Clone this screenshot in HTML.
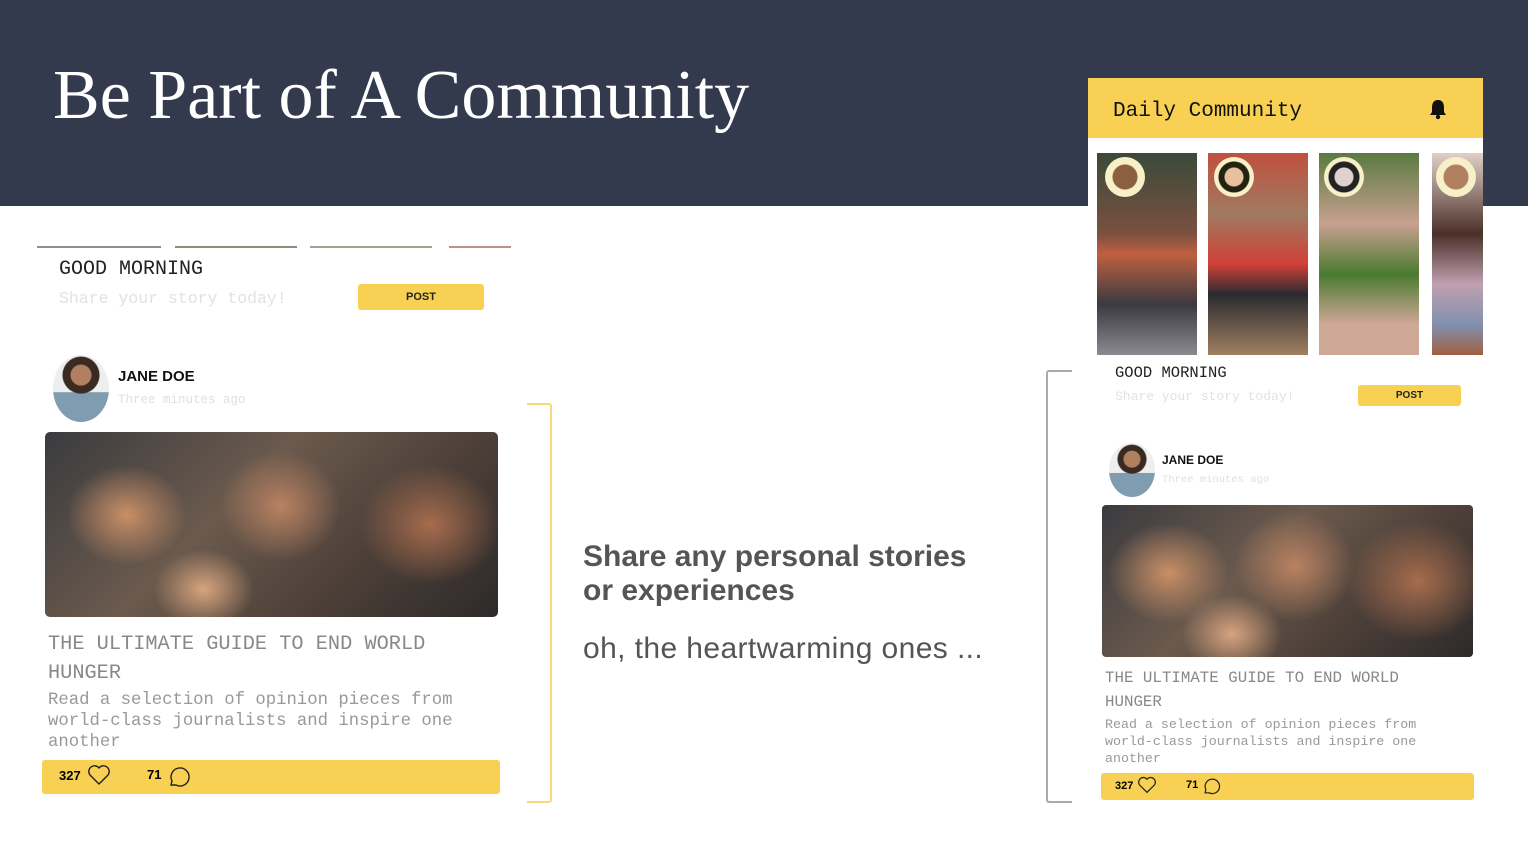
<!DOCTYPE html>
<html><head><style>
*{margin:0;padding:0;box-sizing:border-box}
body{width:1528px;height:854px;position:relative;background:#fff;overflow:hidden;font-family:"Liberation Sans",sans-serif}
.a{position:absolute}
.mono{font-family:"Liberation Mono",monospace}
.photo{background:
radial-gradient(ellipse 60px 50px at 18% 45%,#c98f66,transparent),
radial-gradient(ellipse 60px 55px at 52% 40%,#b98262,transparent),
radial-gradient(ellipse 70px 60px at 85% 50%,#a66c4d,transparent),
radial-gradient(ellipse 50px 40px at 35% 85%,#d7a47e,transparent),
linear-gradient(135deg,#3a3b3f,#6b5a4d 40%,#4c3f38 70%,#2d2a2a);}
.bar{background:#f7d054;border-radius:3px}
.post{background:#f7d054;border-radius:3px;font-size:11px;text-align:center;font-weight:bold;color:#222}
</style></head><body>
<div class="a" style="left:0;top:0;width:1528px;height:206px;background:#333a4d"></div>
<div class="a" style="left:53px;top:56px;font-family:'Liberation Serif',serif;font-size:70px;color:#fff">Be Part of A Community</div>

<div class="a" style="left:37px;top:246px;width:124px;height:2px;background:#8a8f9a"></div>
<div class="a" style="left:175px;top:246px;width:122px;height:2px;background:#8a9080"></div>
<div class="a" style="left:310px;top:246px;width:122px;height:2px;background:#a8a090"></div>
<div class="a" style="left:449px;top:246px;width:62px;height:2px;background:#c09088"></div>
<div class="a mono" style="left:59px;top:258px;font-size:20px;color:#222">GOOD MORNING</div>
<div class="a mono" style="left:59px;top:289px;font-size:16.5px;color:#e2e2e2">Share your story today!</div>
<div class="a post" style="left:358px;top:284px;width:126px;height:26px;line-height:26px">POST</div>
<div class="a" style="left:53px;top:355px;width:56px;height:67px;border-radius:50%;background:radial-gradient(circle at 50% 30%,#b08060 0 10px,#3a2a22 11px 18px,transparent 19px),linear-gradient(#eee 55%,#7f9cb0 56%);"></div>
<div class="a" style="left:118px;top:368px;font-size:15px;font-weight:bold;color:#111">JANE DOE</div>
<div class="a mono" style="left:118px;top:393px;font-size:12.5px;color:#e0e0e0">Three minutes ago</div>
<div class="a photo" style="left:45px;top:432px;width:453px;height:185px;border-radius:5px"></div>
<div class="a mono" style="left:48px;top:630px;font-size:20.3px;line-height:29px;color:#888;width:440px">THE ULTIMATE GUIDE TO END WORLD HUNGER</div>
<div class="a mono" style="left:48px;top:690px;font-size:17.3px;line-height:21px;color:#999;width:440px">Read a selection of opinion pieces from world-class journalists and inspire one another</div>
<div class="a bar" style="left:42px;top:760px;width:458px;height:34px"></div>
<div class="a" style="left:59px;top:768px;font-size:13px;font-weight:bold">327</div>
<svg class="a" style="left:87px;top:764px" width="24" height="22" viewBox="0 0 24 22"><path d="M12 20 L3 11 A5 5 0 0 1 12 4 A5 5 0 0 1 21 11 Z" fill="none" stroke="#222" stroke-width="1.4"/></svg>
<div class="a" style="left:147px;top:767px;font-size:13px;font-weight:bold">71</div>
<svg class="a" style="left:166px;top:764px" width="26" height="25" viewBox="0 0 26 25"><path d="M5 21 L6 17 A9 9 0 1 1 10 21 Z" fill="none" stroke="#222" stroke-width="1.4"/></svg>
<div class="a" style="left:527px;top:403px;width:25px;height:400px;border:2px solid #f7d87a;border-left:none;border-radius:0 3px 3px 0"></div>

<div class="a" style="left:583px;top:540px;font-size:30px;font-weight:bold;color:#555;line-height:34px">Share any personal stories<br>or experiences</div>
<div class="a" style="left:583px;top:632px;font-size:30px;letter-spacing:0.4px;color:#555">oh, the heartwarming ones ...</div>

<div class="a" style="left:1088px;top:78px;width:395px;height:340px;background:#fff"></div>
<div class="a" style="left:1088px;top:78px;width:395px;height:60px;background:#f7d054"></div>
<div class="a mono" style="left:1113px;top:100px;font-size:21px;color:#111">Daily Community</div>
<svg class="a" style="left:1428px;top:98px" width="20" height="22" viewBox="0 0 20 22"><path d="M10 2 C5 2 4 6 4 10 L4 14 L2 17 L18 17 L16 14 L16 10 C16 6 15 2 10 2Z" fill="#111"/><circle cx="10" cy="19" r="2.2" fill="#111"/></svg>
<div class="a" style="left:1097px;top:153px;width:100px;height:202px;background:linear-gradient(#3a4a3a,#7a5040 40%,#c06040 50%,#3a3a40 75%,#8a8a90)"></div>
<div class="a" style="left:1208px;top:153px;width:100px;height:202px;background:linear-gradient(#c05040,#a07a60 30%,#d04038 55%,#2a2a30 70%,#a08060)"></div>
<div class="a" style="left:1319px;top:153px;width:100px;height:202px;background:linear-gradient(#5a7a40,#c8a090 35%,#4a7a30 60%,#d0a898 85%)"></div>
<div class="a" style="left:1432px;top:153px;width:51px;height:202px;background:linear-gradient(#e0d0c8,#4a3028 40%,#c0a0b0 65%,#8090b0 85%,#a06040)"></div>
<div class="a" style="left:1105px;top:157px;width:40px;height:40px;border-radius:50%;background:radial-gradient(circle,#8a6040 0 12px,#f8f0c8 13px)"></div>
<div class="a" style="left:1214px;top:157px;width:40px;height:40px;border-radius:50%;background:radial-gradient(circle,#e8c0a0 0 9px,#221 10px 15px,#f8f0c8 16px)"></div>
<div class="a" style="left:1324px;top:157px;width:40px;height:40px;border-radius:50%;background:radial-gradient(circle,#e0d0d0 0 9px,#222 10px 15px,#f8f0c8 16px)"></div>
<div class="a" style="left:1436px;top:157px;width:40px;height:40px;border-radius:50%;background:radial-gradient(circle,#b08060 0 12px,#f8f0c8 13px)"></div>
<div class="a mono" style="left:1115px;top:364px;font-size:15.5px;color:#222">GOOD MORNING</div>
<div class="a mono" style="left:1115px;top:389px;font-size:13px;color:#e2e2e2">Share your story today!</div>
<div class="a post" style="left:1358px;top:385px;width:103px;height:21px;line-height:21px;font-size:10px">POST</div>
<div class="a" style="left:1109px;top:443px;width:46px;height:54px;border-radius:50%;background:radial-gradient(circle at 50% 30%,#b08060 0 8px,#3a2a22 9px 14px,transparent 15px),linear-gradient(#eee 55%,#7f9cb0 56%);"></div>
<div class="a" style="left:1162px;top:453px;font-size:12px;font-weight:bold;color:#111">JANE DOE</div>
<div class="a mono" style="left:1162px;top:474px;font-size:10.5px;color:#e0e0e0">Three minutes ago</div>
<div class="a photo" style="left:1102px;top:505px;width:371px;height:152px;border-radius:4px"></div>
<div class="a mono" style="left:1105px;top:666px;font-size:15.8px;line-height:24px;color:#888;width:360px">THE ULTIMATE GUIDE TO END WORLD HUNGER</div>
<div class="a mono" style="left:1105px;top:716px;font-size:13.3px;line-height:17px;color:#999;width:360px">Read a selection of opinion pieces from world-class journalists and inspire one another</div>
<div class="a bar" style="left:1101px;top:773px;width:373px;height:27px"></div>
<div class="a" style="left:1115px;top:780px;font-size:11px;font-weight:bold">327</div>
<svg class="a" style="left:1137px;top:776px" width="20" height="18" viewBox="0 0 24 22"><path d="M12 20 L3 11 A5 5 0 0 1 12 4 A5 5 0 0 1 21 11 Z" fill="none" stroke="#222" stroke-width="1.5"/></svg>
<div class="a" style="left:1186px;top:779px;font-size:11px;font-weight:bold">71</div>
<svg class="a" style="left:1201px;top:776px" width="21" height="20" viewBox="0 0 26 25"><path d="M5 21 L6 17 A9 9 0 1 1 10 21 Z" fill="none" stroke="#222" stroke-width="1.5"/></svg>
<div class="a" style="left:1046px;top:370px;width:26px;height:433px;border:2px solid #aaa;border-right:none;border-radius:3px 0 0 3px"></div>
</body></html>
